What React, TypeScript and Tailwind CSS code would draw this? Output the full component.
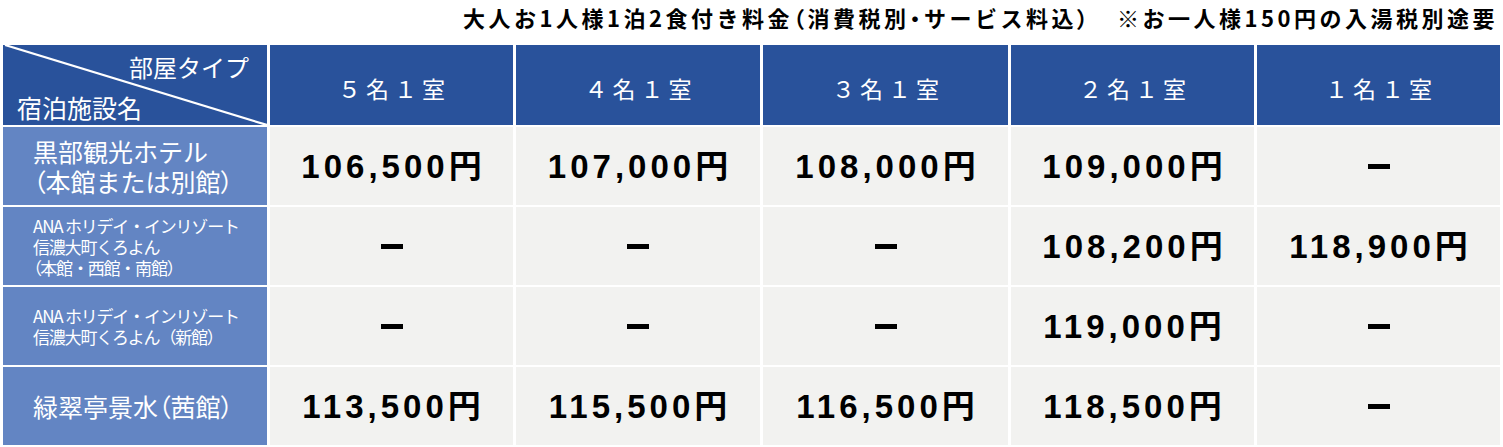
import React from 'react';

const jp = { fontFamily: '"Noto Sans CJK JP", "Noto Sans", sans-serif' };
const price = { fontFamily: '"Liberation Sans", "Noto Sans CJK JP", sans-serif' };

const rooms = ['５名１室', '４名１室', '３名１室', '２名１室', '１名１室'];

type Row = { name: string[]; small?: boolean; prices: (string | null)[] };

const rows: Row[] = [
  { name: ['黒部観光ホテル', '（本館または別館）'], prices: ['106,500円', '107,000円', '108,000円', '109,000円', null] },
  {
    name: ['ANA ホリデイ・インリゾート', '信濃大町くろよん', '（本館・西館・南館）'],
    small: true,
    prices: [null, null, null, '108,200円', '118,900円'],
  },
  {
    name: ['ANA ホリデイ・インリゾート', '信濃大町くろよん（新館）'],
    small: true,
    prices: [null, null, null, '119,000円', null],
  },
  { name: ['緑翠亭景水（茜館）'], prices: ['113,500円', '115,500円', '116,500円', '118,500円', null] },
];

// narrow brackets like the print version
const Tight: React.FC<{ text: string; marks?: RegExp }> = ({ text, marks = /([（）])/ }) => (
  <>
    {text.split(marks).map((part, i) =>
      marks.test(part) ? (
        <span key={i} className="[font-feature-settings:'palt']">
          {part}
        </span>
      ) : (
        part
      )
    )}
  </>
);

// only the opening bracket at line start is pulled in
const LeadTight: React.FC<{ text: string }> = ({ text }) =>
  text.startsWith('（') ? (
    <>
      <span className="[font-feature-settings:'palt']">（</span>
      {text.slice(1)}
    </>
  ) : (
    <>{text}</>
  );

const PriceCell: React.FC<{ value: string | null }> = ({ value }) => (
  <div className="bg-[#f2f2f0] flex items-center justify-center">
    {value ? (
      <span style={price} className="text-[33px] font-bold tracking-[4px] pl-[4px] text-black leading-none">
        {value}
      </span>
    ) : (
      <span className="block w-[22px] h-[5px] bg-black" aria-label="ー" />
    )}
  </div>
);

export default function App() {
  return (
    <div className="bg-white w-[1503px] h-[447px] overflow-hidden" style={jp}>
      <div className="h-[45px] flex justify-end items-start pt-[5px] pr-[5px]">
        <p className="text-[22px] leading-[24px] font-semibold tracking-[3.5px] text-black whitespace-nowrap">
          <Tight text="大人お1人様1泊2食付き料金（消費税別・サービス料込）　※お一人様150円の入湯税別途要" marks={/([（）・])/} />
        </p>
      </div>

      <div className="ml-[3px] grid grid-cols-[264px_243px_244px_245px_243px_243px] grid-rows-[80px_78px_78px_78px_78px] gap-x-[3px] gap-y-[2px] w-[1497px]">
        {/* corner cell */}
        <div className="relative bg-[#29529b] text-white">
          <svg className="absolute inset-0" width="264" height="80" viewBox="0 0 264 80">
            <line x1="2" y1="0" x2="264" y2="80" stroke="white" strokeWidth="2.2" />
          </svg>
          <span className="absolute right-[18px] top-[7px] text-[24px] leading-[30px]">部屋タイプ</span>
          <span className="absolute left-[14px] top-[47px] text-[25px] leading-[30px]">宿泊施設名</span>
        </div>
        {rooms.map((r) => (
          <div key={r} className="bg-[#29529b] flex items-center justify-center pt-[6px]">
            <span className="text-white text-[23px] tracking-[5px] pl-[5px]">{r}</span>
          </div>
        ))}

        {rows.map((row, i) => (
          <React.Fragment key={i}>
            <div className="bg-[#6385c3] text-white flex flex-col justify-center pl-[30px]">
              {row.name.map((line) =>
                row.small ? (
                  <span key={line} className="text-[17px] leading-[21px] tracking-[-1.2px] whitespace-nowrap">
                    <LeadTight text={line} />
                  </span>
                ) : (
                  <span key={line} className="text-[25px] leading-[30px] whitespace-nowrap">
                    <Tight text={line} />
                  </span>
                )
              )}
            </div>
            {row.prices.map((p, j) => (
              <PriceCell key={j} value={p} />
            ))}
          </React.Fragment>
        ))}
      </div>
    </div>
  );
}
